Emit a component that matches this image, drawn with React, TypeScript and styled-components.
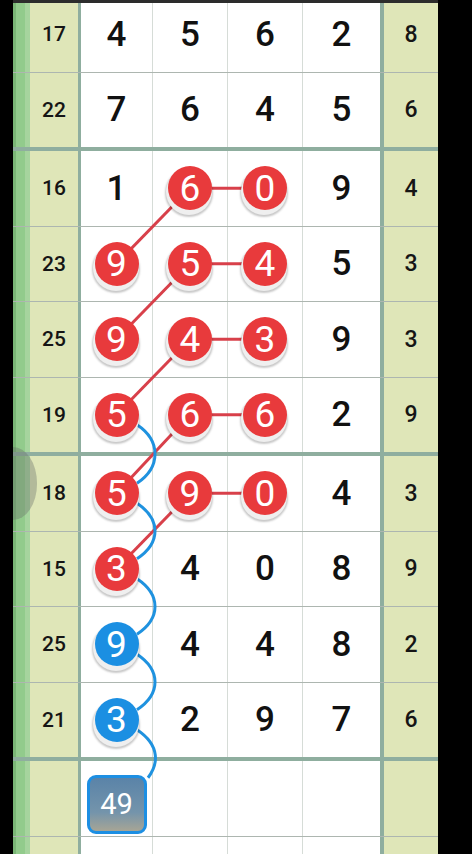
import React from 'react';
import styled, { createGlobalStyle } from 'styled-components';

const GlobalStyle = createGlobalStyle`
  html, body {
    margin: 0;
    padding: 0;
    background: #000;
  }
`;

const Page = styled.div`
  position: relative;
  display: flex;
  width: 472px;
  height: 854px;
  overflow: hidden;
  background: #000;
  font-family: Roboto, 'Liberation Sans', sans-serif;
`;

const Edge = styled.div<{ $w: number }>`
  flex: 0 0 ${p => p.$w}px;
  background: #000;
`;

const Board = styled.div`
  flex: 0 0 425px;
  display: flex;
  flex-direction: column;
  overflow: hidden;
`;

const TopBar = styled.div`
  height: 3px;
  flex: 0 0 3px;
  background: #2c2c2c;
`;

const Viewport = styled.div`
  flex: 1;
  overflow: hidden;
`;

const Rows = styled.div`
  margin-top: -6px;
`;

const Row = styled.div<{ $thick?: boolean }>`
  display: grid;
  grid-template-columns: 17px 51px 72px 75px 75px 81px 54px;
  height: ${p => (p.$thick ? 78.5 : 75.5)}px;
  border-bottom: ${p => (p.$thick ? '4px solid #8fae9f' : '1px solid #adb6b0')};
  box-sizing: border-box;
`;

const Rail = styled.div`
  background: linear-gradient(to right, #7ab676 0, #7ab676 3px, #92cb8c 3px, #92cb8c 12px, #a6d49e 12px);
`;

const Side = styled.div`
  display: flex;
  align-items: center;
  justify-content: center;
  background: #dfe6b8;
  border-right: 3px solid #8fae9f;
  font-size: 21px;
  font-weight: 500;
  color: #151515;
`;

const Cell = styled.div<{ $last?: boolean }>`
  display: flex;
  align-items: center;
  justify-content: center;
  background: #fff;
  border-right: ${p => (p.$last ? '4px solid #8fae9f' : '1px solid #d6dcd7')};
  font-size: 35px;
  font-weight: 500;
  color: #111;
`;

const Tail = styled.div`
  display: flex;
  align-items: center;
  justify-content: center;
  background: #dfe6b8;
  font-size: 23px;
  font-weight: 500;
  color: #151515;
`;

const Ball = styled.span<{ $tone: 'red' | 'blue' }>`
  position: relative;
  z-index: 2;
  display: flex;
  align-items: center;
  justify-content: center;
  width: 44px;
  height: 44px;
  border-radius: 50%;
  background: ${p => (p.$tone === 'red' ? '#e83a3c' : '#1b8fe2')};
  color: #fff;
  font-size: 37px;
  font-weight: 400;
  box-shadow: -1px 4px 0 1px #efefef, -1px 5px 2px 2px rgba(0, 0, 0, 0.22);
`;

const Total = styled.span`
  position: relative;
  z-index: 2;
  display: flex;
  align-items: center;
  justify-content: center;
  margin-top: 12px;
  width: 60px;
  height: 59px;
  box-sizing: border-box;
  border: 3px solid #1d8fe3;
  border-radius: 9px;
  background: linear-gradient(#5a83a8, #7494ab 65%, #a7a595);
  color: #fff;
  font-size: 29px;
  font-weight: 400;
`;

const Links = styled.svg`
  position: absolute;
  left: 0;
  top: 0;
  z-index: 1;
  pointer-events: none;
`;

const Handle = styled.div`
  position: absolute;
  left: 13px;
  top: 447px;
  width: 24px;
  height: 73px;
  z-index: 3;
  border-radius: 0 24px 24px 0 / 0 36px 36px 0;
  background: rgba(105, 112, 105, 0.38);
`;

type Mark = 'r' | 'b' | undefined;
interface IRow {
  n: string;
  cells: string[];
  marks: Mark[];
  tail: string;
  thick?: boolean;
}

const rows: IRow[] = [
  { n: '17', cells: ['4', '5', '6', '2'], marks: [], tail: '8' },
  { n: '22', cells: ['7', '6', '4', '5'], marks: [], tail: '6', thick: true },
  { n: '16', cells: ['1', '6', '0', '9'], marks: [undefined, 'r', 'r'], tail: '4' },
  { n: '23', cells: ['9', '5', '4', '5'], marks: ['r', 'r', 'r'], tail: '3' },
  { n: '25', cells: ['9', '4', '3', '9'], marks: ['r', 'r', 'r'], tail: '3' },
  { n: '19', cells: ['5', '6', '6', '2'], marks: ['r', 'r', 'r'], tail: '9', thick: true },
  { n: '18', cells: ['5', '9', '0', '4'], marks: ['r', 'r', 'r'], tail: '3' },
  { n: '15', cells: ['3', '4', '0', '8'], marks: ['r'], tail: '9' },
  { n: '25', cells: ['9', '4', '4', '8'], marks: ['b'], tail: '2' },
  { n: '21', cells: ['3', '2', '9', '7'], marks: ['b'], tail: '6', thick: true },
  { n: '', cells: ['', '', '', ''], marks: [], tail: '' },
  { n: '', cells: ['', '', '', ''], marks: [], tail: '' },
];

// ball centres in page coordinates
const colX = [116.5, 190, 265, 341];
const rowY: number[] = [];
let top = -3;
rows.forEach(r => {
  const h = r.thick ? 78.5 : 75.5;
  rowY.push(top + 74.5 / 2);
  top += h;
});

const red = '#d8404a';
const blue = '#1f92df';

const diagonals = [
  [3, 2],
  [4, 3],
  [5, 4],
  [6, 5],
  [7, 6],
];
const pairs = [2, 3, 4, 5, 6];
const chain = [5, 6, 7, 8];

const curve = (y1: number, y2: number) =>
  `M 137 ${y1 + 10} C 161 ${y1 + 26}, 161 ${y2 - 26}, 137 ${y2 - 10}`;

const App: React.FC = () => {
  return (
    <>
      <GlobalStyle />
      <Page>
        <Edge $w={13} />
        <Board>
          <TopBar />
          <Viewport>
            <Rows>
              {rows.map((row, i) => (
                <Row $thick={row.thick} key={i}>
                  <Rail />
                  <Side>{row.n}</Side>
                  {row.cells.map((val, c) => {
                    const mark = row.marks[c];
                    return (
                      <Cell $last={c === 3} key={c}>
                        {mark ? <Ball $tone={mark === 'r' ? 'red' : 'blue'}>{val}</Ball> : val}
                        {i === 10 && c === 0 && <Total>49</Total>}
                      </Cell>
                    );
                  })}
                  <Tail>{row.tail}</Tail>
                </Row>
              ))}
            </Rows>
          </Viewport>
        </Board>
        <Edge $w={34} />
        <Links width={472} height={854} viewBox="0 0 472 854">
          {diagonals.map(([a, b]) => (
            <line key={`d${a}`} x1={colX[0]} y1={rowY[a]} x2={colX[1]} y2={rowY[b]} stroke={red} strokeWidth={3} />
          ))}
          {pairs.map(r => (
            <line key={`p${r}`} x1={colX[1]} y1={rowY[r]} x2={colX[2]} y2={rowY[r]} stroke={red} strokeWidth={3} />
          ))}
          {chain.map(r => (
            <path key={`c${r}`} d={curve(rowY[r], rowY[r + 1])} fill="none" stroke={blue} strokeWidth={3} />
          ))}
          <path d={`M 137 ${rowY[9] + 10} C 161 ${rowY[9] + 26}, 158 ${rowY[9] + 45}, 148 ${rowY[9] + 58}`} fill="none" stroke={blue} strokeWidth={3} />
        </Links>
        <Handle />
      </Page>
    </>
  );
};

export default App;
